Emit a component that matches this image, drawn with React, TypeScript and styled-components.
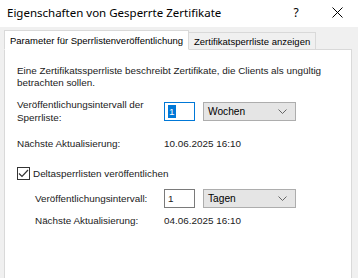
import styled, { createGlobalStyle } from "styled-components";

const Global = createGlobalStyle`
  html, body { margin: 0; padding: 0; }
  body {
    width: 358px;
    height: 278px;
    overflow: hidden;
    background: #f0f0f0;
    font-family: "Liberation Sans", Arial, sans-serif;
    font-size: 9.9px;
    color: #1a1a1a;
  }
`;

const Window = styled.div`
  width: 358px;
  height: 278px;
  display: flex;
  flex-direction: column;
  background: #f0f0f0;
`;

const TitleBar = styled.div`
  height: 27px;
  flex: none;
  background: #fff;
  display: flex;
  align-items: center;
  padding-left: 7px;
`;

const Title = styled.div`
  flex: 1;
  font-family: "Noto Sans", sans-serif;
  font-size: 11.5px;
  color: #000;
  margin-top: -3px;
`;

const TitleButton = styled.div<{ $w: number }>`
  width: ${(p) => p.$w}px;
  height: 27px;
  display: flex;
  align-items: center;
  justify-content: center;
  font-family: "Noto Sans", sans-serif;
  font-size: 12px;
  color: #000;
  margin-top: -3px;
`;

const Body = styled.div`
  flex: 1;
  display: flex;
  flex-direction: column;
  padding: 2px 6px 0 4px;
`;

const Tabs = styled.div`
  display: flex;
  align-items: flex-end;
  height: 20px;
  position: relative;
  z-index: 1;
`;

const Tab = styled.div<{ $active?: boolean }>`
  height: ${(p) => (p.$active ? 20 : 17)}px;
  box-sizing: border-box;
  padding: 0 5px;
  display: flex;
  align-items: center;
  white-space: nowrap;
  font-size: 9.5px;
  color: #000;
  background: ${(p) => (p.$active ? "#fff" : "#f0f0f0")};
  border: 1px solid #d9d9d9;
  border-bottom: ${(p) => (p.$active ? "1px solid #fff" : "none")};
  margin-bottom: ${(p) => (p.$active ? -1 : 0)}px;
  ${(p) => (p.$active ? "" : "border-left: none;")}
`;

const Panel = styled.div`
  flex: 1;
  background: #fff;
  border: 1px solid #d9d9d9;
  border-bottom: none;
  padding: 15px 12px 0 12px;
  display: flex;
  flex-direction: column;
`;

const Intro = styled.p`
  margin: 0 0 7px 0;
  line-height: 12px;
  white-space: nowrap;
`;

const Row = styled.div<{ $indent?: number; $h: number }>`
  display: flex;
  align-items: center;
  height: ${(p) => p.$h}px;
  flex: none;
  padding-left: ${(p) => p.$indent ?? 0}px;
  white-space: nowrap;
`;

const Label = styled.div<{ $w: number }>`
  width: ${(p) => p.$w}px;
  flex: none;
  line-height: 13px;
`;

const Input = styled.div<{ $focus?: boolean }>`
  width: 31px;
  height: 19px;
  flex: none;
  box-sizing: border-box;
  border: 1px solid ${(p) => (p.$focus ? "#0078d7" : "#7a7a7a")};
  display: flex;
  align-items: center;
  padding-left: 3px;
  margin-right: 8px;
  background: #fff;
`;

const Selected = styled.span`
  background: #0078d7;
  color: #fff;
  padding: 0 1px;
  line-height: 13px;
`;

const Select = styled.div`
  width: 93px;
  height: 19px;
  flex: none;
  box-sizing: border-box;
  background: #e5e5e5;
  border: 1px solid #adadad;
  display: flex;
  align-items: center;
  justify-content: space-between;
  padding: 0 8px 0 4px;
  font-size: 10.2px;
  color: #000;
`;

const Check = styled.div`
  width: 13px;
  height: 13px;
  box-sizing: border-box;
  border: 1px solid #333;
  margin-right: 3px;
  display: flex;
  align-items: center;
  justify-content: center;
  background: #fff;
`;

const Chevron = () => (
  <svg width="9" height="5" viewBox="0 0 9 5">
    <path d="M0.5 0.5 L4.5 4.5 L8.5 0.5" fill="none" stroke="#666" strokeWidth="1" />
  </svg>
);

export default function App() {
  return (
    <Window>
      <Global />
      <TitleBar>
        <Title>Eigenschaften von Gesperrte Zertifikate</Title>
        <TitleButton $w={40}>?</TitleButton>
        <TitleButton $w={42}>
          <svg width="11" height="11" viewBox="0 0 11 11">
            <path d="M0.5 0.5 L10.5 10.5 M10.5 0.5 L0.5 10.5" stroke="#000" strokeWidth="1" />
          </svg>
        </TitleButton>
      </TitleBar>
      <Body>
        <Tabs>
          <Tab $active>Parameter für Sperrlistenveröffentlichung</Tab>
          <Tab>Zertifikatsperrliste anzeigen</Tab>
        </Tabs>
        <Panel>
          <Intro>
            Eine Zertifikatssperrliste beschreibt Zertifikate, die Clients als ungültig
            <br />
            betrachten sollen.
          </Intro>
          <Row $h={30}>
            <Label $w={147}>
              Veröffentlichungsintervall der
              <br />
              Sperrliste:
            </Label>
            <Input $focus>
              <Selected>1</Selected>
            </Input>
            <Select>
              Wochen
              <Chevron />
            </Select>
          </Row>
          <Row $h={35}>
            <Label $w={147}>Nächste Aktualisierung:</Label>
            10.06.2025 16:10
          </Row>
          <Row $h={25}>
            <Check>
              <svg width="11" height="9" viewBox="0 0 11 9">
                <path d="M1 4.5 L4 7.5 L10 1" fill="none" stroke="#333" strokeWidth="1.2" />
              </svg>
            </Check>
            Deltasperrlisten veröffentlichen
          </Row>
          <Row $h={25} $indent={18}>
            <Label $w={129}>Veröffentlichungsintervall:</Label>
            <Input>1</Input>
            <Select>
              Tagen
              <Chevron />
            </Select>
          </Row>
          <Row $h={19} $indent={18}>
            <Label $w={129}>Nächste Aktualisierung:</Label>
            04.06.2025 16:10
          </Row>
        </Panel>
      </Body>
    </Window>
  );
}
